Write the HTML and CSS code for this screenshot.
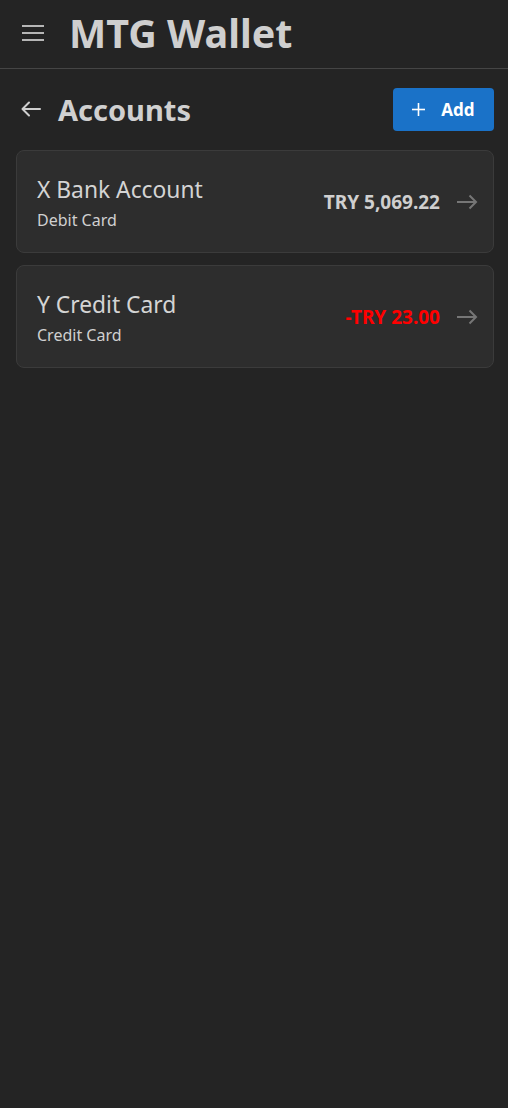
FILE: index.html
```html
<!DOCTYPE html>
<html>
<head>
<meta charset="utf-8">
<link rel="stylesheet" href="styles.css">
</head>
<body>
<header class="topbar">
  <button class="icon-btn menu" aria-label="menu">
    <svg width="22" height="16" viewBox="0 0 22 16"><g stroke="#dcdcdc" stroke-width="1.6"><line x1="0" y1="1" x2="22" y2="1"/><line x1="0" y1="8" x2="22" y2="8"/><line x1="0" y1="15" x2="22" y2="15"/></g></svg>
  </button>
  <h1 class="brand">MTG Wallet</h1>
</header>
<main class="content">
  <div class="page-head">
    <div class="title-wrap">
      <svg class="back" width="20" height="16" viewBox="0 0 20 16"><g fill="none" stroke="#cfcfcf" stroke-width="2" stroke-linecap="round" stroke-linejoin="round"><path d="M19 8H2"/><path d="M8 1.5L1.5 8L8 14.5"/></g></svg>
      <h2 class="page-title">Accounts</h2>
    </div>
    <button class="add-btn"><svg width="13" height="13" viewBox="0 0 13 13"><g stroke="#fff" stroke-width="1.6"><line x1="6.5" y1="0" x2="6.5" y2="13"/><line x1="0" y1="6.5" x2="13" y2="6.5"/></g></svg><span>Add</span></button>
  </div>
  <div class="list">
    <div class="card">
      <div class="info">
        <div class="name">X Bank Account</div>
        <div class="type">Debit Card</div>
      </div>
      <div class="amount">TRY 5,069.22</div>
      <svg class="go" width="21" height="16" viewBox="0 0 21 16"><g fill="none" stroke="#767676" stroke-width="2"><path d="M0 8H19"/><path d="M12.5 1.5L19 8L12.5 14.5"/></g></svg>
    </div>
    <div class="card">
      <div class="info">
        <div class="name">Y Credit Card</div>
        <div class="type">Credit Card</div>
      </div>
      <div class="amount neg">-TRY 23.00</div>
      <svg class="go" width="21" height="16" viewBox="0 0 21 16"><g fill="none" stroke="#767676" stroke-width="2"><path d="M0 8H19"/><path d="M12.5 1.5L19 8L12.5 14.5"/></g></svg>
    </div>
  </div>
</main>
</body>
</html>
```
FILE: styles.css
```css
* { box-sizing: border-box; }
html, body { margin: 0; padding: 0; background: #242424; }
body {
  font-family: "Noto Sans", "Open Sans", "Liberation Sans", sans-serif;
  color: #d6d6d6;
  min-height: 1108px;
}
.topbar {
  height: 69px;
  border-bottom: 1px solid #454545;
  display: flex;
  align-items: center;
  padding-left: 22px;
}
.icon-btn {
  background: none; border: 0; padding: 0; margin: 0;
  display: flex; align-items: center;
}
.menu { width: 22px; height: 16px; margin-top: -3px; }
.brand {
  margin: 0 0 0 25px;
  font-size: 39.5px;
  font-weight: 700;
  color: #cfcfcf;
  line-height: 1;
  margin-top: 0;
}
.content { padding: 19px 14px 0 16px; }
.page-head {
  display: flex;
  align-items: center;
  justify-content: space-between;
  height: 43px;
}
.title-wrap { display: flex; align-items: center; }
.back { margin-left: 5px; margin-top: -2px; }
.page-title {
  margin: 0 0 0 17px;
  font-size: 29px;
  font-weight: 700;
  color: #d0d0d0;
  line-height: 1;
}
.add-btn {
  width: 101px; height: 43px;
  background: #1a72c8;
  border: 0; border-radius: 4px;
  display: flex; align-items: center; justify-content: center; gap: 16px;
  color: #fff; font-family: inherit; font-size: 17px; font-weight: 700;
  padding: 0 0 0 0;
}
.add-btn span { margin-top: -1px; }
.list { display: flex; flex-direction: column; gap: 12px; margin-top: 19px; }
.card {
  height: 103px;
  background: #2d2d2d;
  border: 1px solid #3b3b3b;
  border-radius: 8px;
  display: flex;
  align-items: center;
  padding: 0 15px 0 20px;
}
.info { flex: 1; margin-top: 3px; }
.name { font-size: 22.8px; color: #d4d4d4; line-height: 30px; }
.type { font-size: 16px; color: #d0d0d0; line-height: 22px; margin-top: 4px; }
.amount { font-size: 19px; font-weight: 700; color: #cfcfcf; margin-right: 17px; }
.amount.neg { color: #f00; }
.go { flex: none; }
```
